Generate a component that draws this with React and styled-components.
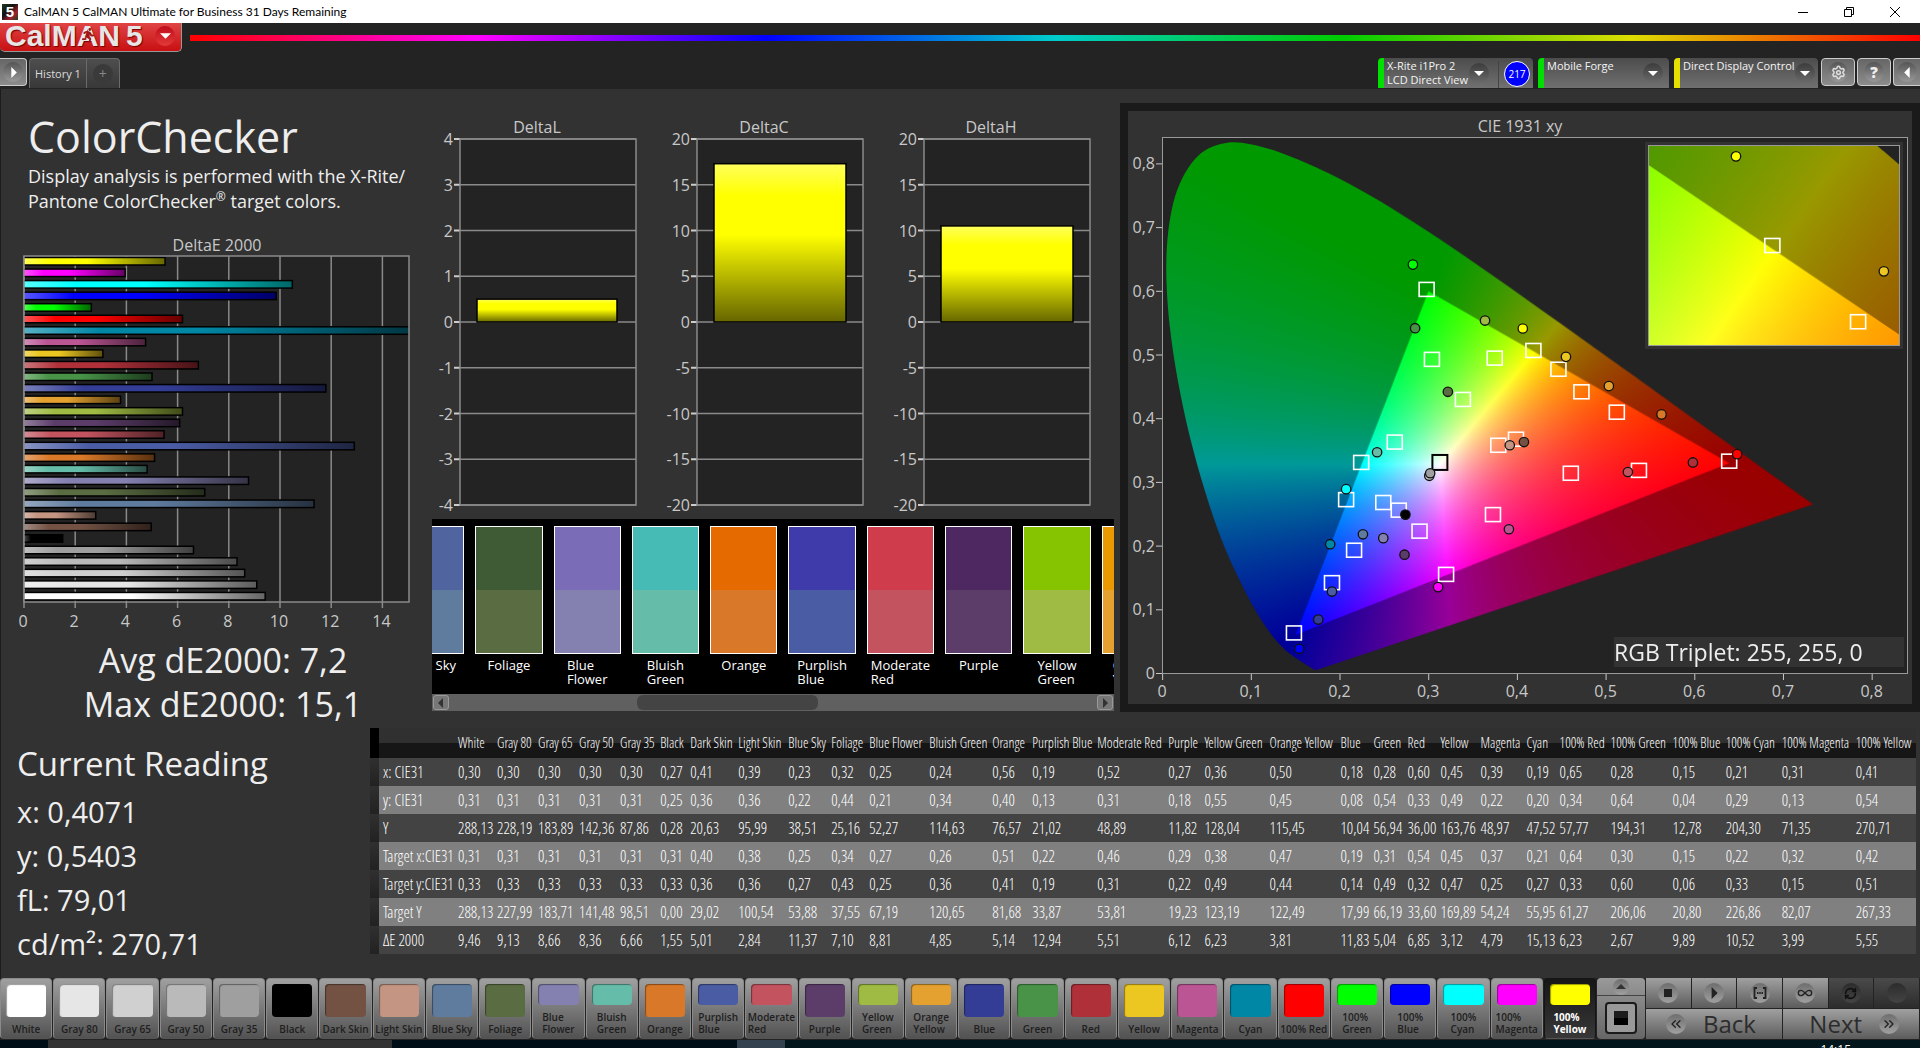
import React, { useEffect, useRef } from "react";
import styled, { createGlobalStyle } from "styled-components";
import { FaRunning } from "react-icons/fa";
import {
  ChevronsLeft,
  ChevronsRight,
  Infinity as InfinityIcon,
  RefreshCw,
  Settings,
} from "lucide-react";

// name, target color, measured color, then the table column:
// x, y, Y, target x, target y, target Y, dE2000, column weight
const PATCHES = [
  ["White", "#ffffff", "#ffffff", "0,30", "0,31", "288,13", "0,31", "0,33", "288,13", "9,46", 39],
  ["Gray 80", "#e6e6e6", "#e6e6e6", "0,30", "0,31", "228,19", "0,31", "0,33", "227,99", "9,13", 41],
  ["Gray 65", "#d0d0d0", "#d0d0d0", "0,30", "0,31", "183,89", "0,31", "0,33", "183,71", "8,66", 41],
  ["Gray 50", "#bababa", "#bababa", "0,30", "0,31", "142,36", "0,31", "0,33", "141,48", "8,36", 41],
  ["Gray 35", "#9f9f9f", "#9f9f9f", "0,30", "0,31", "87,86", "0,31", "0,33", "98,51", "6,66", 40],
  ["Black", "#000000", "#000000", "0,27", "0,25", "0,28", "0,31", "0,33", "0,00", "1,55", 30],
  ["Dark Skin", "#735244", "#735244", "0,41", "0,36", "20,63", "0,40", "0,36", "29,02", "5,01", 48],
  ["Light Skin", "#c49582", "#c49582", "0,39", "0,36", "95,99", "0,38", "0,36", "100,54", "2,84", 50],
  ["Blue Sky", "#5f7b9e", "#50659f", "0,23", "0,22", "38,51", "0,25", "0,27", "53,88", "11,37", 43],
  ["Foliage", "#5a6c42", "#3f5b35", "0,32", "0,44", "25,16", "0,34", "0,43", "37,55", "7,10", 38],
  ["Blue Flower", "#8480b0", "#7b6cb7", "0,25", "0,21", "52,27", "0,27", "0,25", "67,19", "8,81", 60],
  ["Bluish Green", "#65bda9", "#46bab4", "0,24", "0,34", "114,63", "0,26", "0,36", "120,65", "4,85", 63],
  ["Orange", "#d97828", "#e56b00", "0,56", "0,40", "76,57", "0,51", "0,41", "81,68", "5,14", 40],
  ["Purplish Blue", "#4a5ca4", "#3f3baa", "0,19", "0,13", "21,02", "0,22", "0,19", "33,87", "12,94", 65],
  ["Moderate Red", "#c2535f", "#cf3c4b", "0,52", "0,31", "48,89", "0,46", "0,31", "53,81", "5,51", 71],
  ["Purple", "#5c3d6a", "#4e2861", "0,27", "0,18", "11,82", "0,29", "0,22", "19,23", "6,12", 36],
  ["Yellow Green", "#9fbb43", "#86c300", "0,36", "0,55", "128,04", "0,38", "0,49", "123,19", "6,23", 65],
  ["Orange Yellow", "#e5a12f", "#ea9a00", "0,50", "0,45", "115,45", "0,47", "0,44", "122,49", "3,81", 71],
  ["Blue", "#333d96", "#333d96", "0,18", "0,08", "10,04", "0,19", "0,14", "17,99", "11,83", 33],
  ["Green", "#489348", "#489348", "0,28", "0,54", "56,94", "0,31", "0,49", "66,19", "5,04", 34],
  ["Red", "#af3039", "#af3039", "0,60", "0,33", "36,00", "0,54", "0,32", "33,60", "6,85", 33],
  ["Yellow", "#ecc721", "#ecc721", "0,45", "0,49", "163,76", "0,45", "0,47", "169,89", "3,12", 40],
  ["Magenta", "#bb5594", "#bb5594", "0,39", "0,22", "48,97", "0,37", "0,25", "54,24", "4,79", 46],
  ["Cyan", "#0087a6", "#0087a6", "0,19", "0,20", "47,52", "0,21", "0,27", "55,95", "15,13", 33],
  ["100% Red", "#ff0000", "#ff0000", "0,65", "0,34", "57,77", "0,64", "0,33", "61,27", "6,23", 51],
  ["100% Green", "#00ff00", "#00ff00", "0,28", "0,64", "194,31", "0,30", "0,60", "206,06", "2,67", 62],
  ["100% Blue", "#0000ff", "#0000ff", "0,15", "0,04", "12,78", "0,15", "0,06", "20,80", "9,89", 53],
  ["100% Cyan", "#00ffff", "#00ffff", "0,21", "0,29", "204,30", "0,22", "0,33", "226,86", "10,52", 56],
  ["100% Magenta", "#ff00ff", "#ff00ff", "0,31", "0,13", "71,35", "0,32", "0,15", "82,07", "3,99", 74],
  ["100% Yellow", "#ffff00", "#ffff00", "0,41", "0,54", "270,71", "0,42", "0,51", "267,33", "5,55", 64],
].map(([name, target, measured, ...rest]) => ({
  name,
  target,
  measured,
  values: rest.slice(0, 7),
  dE: parseFloat(rest[6].replace(",", ".")),
  weight: rest[7],
}));

const GRIP_WEIGHT = 9;
const LABEL_WEIGHT = 75;
const TOTAL_WEIGHT = PATCHES.reduce((sum, p) => sum + p.weight, GRIP_WEIGHT + LABEL_WEIGHT);
const colWidth = (weight) => `${(weight / TOTAL_WEIGHT) * 100}%`;

const ROW_LABELS = ["x: CIE31", "y: CIE31", "Y", "Target x:CIE31", "Target y:CIE31", "Target Y", "ΔE 2000"];

const LOCUS = [
  [0.1741, 0.005], [0.1714, 0.0051], [0.1689, 0.0069], [0.1644, 0.0109], [0.1566, 0.0177],
  [0.144, 0.0297], [0.1355, 0.0399], [0.1241, 0.0578], [0.1096, 0.0868], [0.0913, 0.1327],
  [0.0687, 0.2007], [0.0454, 0.295], [0.0235, 0.4127], [0.0082, 0.5384], [0.0039, 0.6548],
  [0.0139, 0.7502], [0.0389, 0.812], [0.0743, 0.8338], [0.1142, 0.8262], [0.1547, 0.8059],
  [0.1929, 0.7816], [0.2296, 0.7543], [0.2658, 0.7243], [0.3016, 0.6923], [0.3373, 0.6589],
  [0.3731, 0.6245], [0.4087, 0.5896], [0.4441, 0.5547], [0.4788, 0.5202], [0.5125, 0.4866],
  [0.5752, 0.4242], [0.627, 0.3725], [0.6658, 0.334], [0.6915, 0.3083], [0.719, 0.2809],
  [0.7347, 0.2653],
];

const REC709 = [[0.64, 0.33], [0.3, 0.6], [0.15, 0.06]];

const TARGETS = [
  [0.298, 0.603], [0.304, 0.493], [0.375, 0.495], [0.4187, 0.507], [0.447, 0.4775],
  [0.473, 0.442], [0.513, 0.41], [0.339, 0.43], [0.262, 0.363], [0.224, 0.331],
  [0.207, 0.2725], [0.249, 0.268], [0.2665, 0.256], [0.29, 0.223], [0.373, 0.249],
  [0.461, 0.314], [0.538, 0.3185], [0.64, 0.333], [0.399, 0.3675], [0.379, 0.358],
  [0.216, 0.193], [0.191, 0.142], [0.148, 0.063], [0.32, 0.155],
];

const MEASURED = [
  [0.2825, 0.642, "#00ff00"], [0.285, 0.542, "#489348"], [0.364, 0.554, "#9fbb43"],
  [0.4067, 0.5415, "#ffff00"], [0.4555, 0.497, "#ecc721"], [0.504, 0.451, "#e5a12f"],
  [0.5635, 0.4065, "#d97828"], [0.322, 0.442, "#5a6c42"], [0.242, 0.347, "#65bda9"],
  [0.207, 0.289, "#00ffff"], [0.301, 0.31, "#c8c8c8"], [0.302, 0.314, "#9f9f9f"],
  [0.392, 0.358, "#c49582"], [0.408, 0.363, "#735244"], [0.599, 0.331, "#af3039"],
  [0.649, 0.344, "#ff0000"], [0.5255, 0.316, "#c2535f"], [0.391, 0.226, "#bb5594"],
  [0.274, 0.249, "#000000"], [0.226, 0.218, "#5f7b9e"], [0.249, 0.212, "#8480b0"],
  [0.189, 0.2025, "#0087a6"], [0.273, 0.186, "#5c3d6a"], [0.311, 0.135, "#ff00ff"],
  [0.191, 0.128, "#4a5ca4"], [0.1755, 0.084, "#333d96"], [0.154, 0.038, "#0000ff"],
];

const MAIN_VIEW = { x0: 0, x1: 0.841, y0: 0, y1: 0.841, w: 745, h: 536 };
const ZOOM_VIEW = { x0: 0.378, x1: 0.4605, y0: 0.4685, y1: 0.5455, w: 248, h: 198 };

const px = (view, x) => ((x - view.x0) / (view.x1 - view.x0)) * view.w;
const py = (view, y) => ((view.y1 - y) / (view.y1 - view.y0)) * view.h;

const xyToRgb = (x, y) => {
  const z = 1 - x - y;
  const rgb = [
    3.2406 * x - 1.5372 * y - 0.4986 * z,
    -0.9689 * x + 1.8758 * y + 0.0415 * z,
    0.0557 * x - 0.204 * y + 1.057 * z,
  ].map((v) => Math.max(0, v));
  const max = Math.max(...rgb) || 1;
  return rgb.map((v) => (v / max) * 255);
};

const drawLocus = (ctx, view) => {
  const pts = LOCUS.map(([x, y]) => [px(view, x), py(view, y)]);
  ctx.moveTo(...pts[0]);
  for (let i = 0; i < pts.length - 1; i++) {
    const p0 = pts[i - 1] || pts[i];
    const p1 = pts[i];
    const p2 = pts[i + 1];
    const p3 = pts[i + 2] || p2;
    ctx.bezierCurveTo(
      p1[0] + (p2[0] - p0[0]) / 6,
      p1[1] + (p2[1] - p0[1]) / 6,
      p2[0] - (p3[0] - p1[0]) / 6,
      p2[1] - (p3[1] - p1[1]) / 6,
      p2[0],
      p2[1]
    );
  }
  ctx.closePath();
};

const ChromaPlot = ({ view, children }) => {
  const ref = useRef(null);

  useEffect(() => {
    const ctx = ref.current.getContext("2d");
    const { w, h } = view;
    const image = ctx.createImageData(w, h);
    for (let j = 0; j < h; j++) {
      for (let i = 0; i < w; i++) {
        const x = view.x0 + (i / w) * (view.x1 - view.x0);
        const y = view.y1 - (j / h) * (view.y1 - view.y0);
        const [r, g, b] = xyToRgb(x, y);
        image.data.set([r, g, b, 255], (j * w + i) * 4);
      }
    }
    ctx.putImageData(image, 0, 0);

    // darken everything outside the gamut triangle
    ctx.fillStyle = "rgba(0, 0, 0, 0.4)";
    ctx.beginPath();
    ctx.rect(0, 0, w, h);
    REC709.forEach(([x, y], i) =>
      i ? ctx.lineTo(px(view, x), py(view, y)) : ctx.moveTo(px(view, x), py(view, y))
    );
    ctx.closePath();
    ctx.fill("evenodd");

    ctx.globalCompositeOperation = "destination-in";
    ctx.fillStyle = "#000";
    ctx.beginPath();
    drawLocus(ctx, view);
    ctx.fill();
    ctx.globalCompositeOperation = "source-over";
  }, [view]);

  return (
    <PlotStack>
      <canvas ref={ref} width={view.w} height={view.h} />
      <svg viewBox={`0 0 ${view.w} ${view.h}`} preserveAspectRatio="none">
        {TARGETS.map(([x, y]) => (
          <rect
            key={`${x}${y}`}
            x={px(view, x) - 7.5}
            y={py(view, y) - 7}
            width="15"
            height="14"
            fill="none"
            stroke="#fff"
            strokeWidth="1.6"
          />
        ))}
        <rect x={px(view, 0.313) - 7.5} y={py(view, 0.331) - 7.5} width="15" height="15" fill="none" stroke="#000" strokeWidth="2" />
        {MEASURED.map(([x, y, color]) => (
          <circle
            key={`${x}${y}`}
            cx={px(view, x)}
            cy={py(view, y)}
            r="4.7"
            fill={color}
            stroke="#111"
            strokeWidth="1.3"
          />
        ))}
      </svg>
      {children}
    </PlotStack>
  );
};

const CieChart = () => {
  const ticks = [0, 1, 2, 3, 4, 5, 6, 7, 8];
  const label = (t) => (t ? `0,${t}` : "0");
  return (
    <CiePanel>
      <ChartTitle>CIE 1931 xy</ChartTitle>
      <CieGrid>
        <svg viewBox="0 0 34 550" width="34" height="550">
          {ticks.map((t) => (
            <g key={t}>
              <AxisText x="27" y={542 - t * 63.7} textAnchor="end">
                {label(t)}
              </AxisText>
              <path d={`M28 ${536.5 - t * 63.7}h6`} stroke="#c8c8c8" />
            </g>
          ))}
        </svg>
        <CieFrame>
          <ChromaPlot view={MAIN_VIEW}>
            <ZoomBox>
              <ChromaPlot view={ZOOM_VIEW} />
            </ZoomBox>
            <Triplet>RGB Triplet: 255, 255, 0</Triplet>
          </ChromaPlot>
        </CieFrame>
      </CieGrid>
      <svg viewBox="0 0 783 30" width="100%">
        {ticks.map((t) => (
          <g key={t}>
            <path d={`M${34.5 + t * 88.6} 0v6`} stroke="#c8c8c8" />
            <AxisText x={34 + t * 88.6} y="23" textAnchor="middle">
              {label(t)}
            </AxisText>
          </g>
        ))}
      </svg>
    </CiePanel>
  );
};

const DeltaEChart = () => {
  const scale = 25.6;
  const bars = [...PATCHES].reverse();
  return (
    <svg viewBox="0 0 410 400" width="100%" role="img" aria-label="DeltaE 2000">
      <defs>
        <linearGradient id="shadeX">
          <stop offset="0" stopColor="#fff" stopOpacity="0.35" />
          <stop offset="0.2" stopColor="#fff" stopOpacity="0" />
          <stop offset="0.45" stopColor="#000" stopOpacity="0" />
          <stop offset="1" stopColor="#000" stopOpacity="0.6" />
        </linearGradient>
        <clipPath id="plotE">
          <rect x="24" y="26" width="385" height="348" />
        </clipPath>
      </defs>
      <AxisText x="217" y="22" textAnchor="middle">
        DeltaE 2000
      </AxisText>
      <rect x="24" y="27" width="385" height="346" fill="#232323" />
      {[0, 2, 4, 6, 8, 10, 12, 14].map((t) => (
        <g key={t}>
          <path d={`M${24 + t * scale} 27v352`} stroke="#8a8a8a" strokeWidth="1.5" />
          <AxisText x={23 + t * scale} y="398" textAnchor="middle">
            {t}
          </AxisText>
        </g>
      ))}
      <g clipPath="url(#plotE)">
        {bars.map((b, i) => (
          <g key={b.name}>
            <rect x="23" y={28.5 + i * 11.55} width={b.dE * scale} height="7.5" fill={b.target} />
            <rect
              x="23"
              y={28.5 + i * 11.55}
              width={b.dE * scale}
              height="7.5"
              fill="url(#shadeX)"
              stroke="#000"
              strokeWidth="1.5"
            />
          </g>
        ))}
      </g>
      <rect x="24" y="27" width="385" height="346" fill="none" stroke="#8a8a8a" strokeWidth="1.5" />
    </svg>
  );
};

const DeltaChart = ({ title, max, left, value, barLeft, barRight }) => {
  const steps = [4, 3, 2, 1, 0, -1, -2, -3, -4];
  const zero = 205;
  const height = (value / max) * 183;
  return (
    <svg viewBox="0 0 210 402" role="img" aria-label={title}>
      <defs>
        <linearGradient id="shadeY" x1="0" y1="0" x2="0" y2="1">
          <stop offset="0" stopColor="#ffff5c" />
          <stop offset="0.2" stopColor="#ffff00" />
          <stop offset="0.45" stopColor="#ffff00" />
          <stop offset="1" stopColor="#666600" />
        </linearGradient>
      </defs>
      <AxisText x="105" y="16" textAnchor="middle">
        {title}
      </AxisText>
      <rect x={left} y="22" width={204 - left} height="366" fill="#232323" />
      {steps.map((s) => (
        <g key={s}>
          <path d={`M${left} ${zero - s * 45.75}H204`} stroke="#8a8a8a" strokeWidth="1.5" />
          <path d={`M${left - 6} ${zero - s * 45.75}h6`} stroke="#ccc" strokeWidth="2" />
          <AxisText x={left - 7} y={zero + 6 - s * 45.75} textAnchor="end">
            {(s * max) / 4}
          </AxisText>
        </g>
      ))}
      <rect x={left} y="22" width={204 - left} height="366" fill="none" stroke="#8a8a8a" strokeWidth="1.5" />
      <rect
        x={barLeft}
        y={zero - height}
        width={barRight - barLeft}
        height={height}
        fill="url(#shadeY)"
        stroke="#000"
        strokeWidth="1.5"
      />
    </svg>
  );
};

const splitLabel = (name) => {
  const words = name.split(" ");
  const second = words[1];
  if (!second || /^(Gray|Dark|Light)/.test(name) || name === "Blue Sky" || name === "100% Red") {
    return [name];
  }
  return words;
};

const Lines = ({ name }) => (
  <LabelBlock>
    {splitLabel(name).map((line) => (
      <div key={line}>{line}</div>
    ))}
  </LabelBlock>
);

const SwatchStrip = () => (
  <Strip>
    <StripItems>
      {PATCHES.slice(8, 18).map((p) => (
        <StripItem key={p.name}>
          <Swatch $top={p.measured} $bottom={p.target} />
          <Lines name={p.name} />
        </StripItem>
      ))}
    </StripItems>
    <ScrollBar>
      <ScrollButton aria-label="Scroll left">
        <Triangle $dir="left" $color="#333" />
      </ScrollButton>
      <ScrollTrack>
        <ScrollThumb />
      </ScrollTrack>
      <ScrollButton aria-label="Scroll right">
        <Triangle $dir="right" $color="#333" />
      </ScrollButton>
    </ScrollBar>
  </Strip>
);

const Triangle = ({ $dir, $color = "#fff", size = 10 }) => {
  const paths = {
    left: "M7 0v10L2 5z",
    right: "M3 0v10l5-5z",
    down: "M0 3h10L5 8z",
    up: "M0 7h10L5 2z",
  };
  return (
    <svg width={size} height={size} viewBox="0 0 10 10">
      <path d={paths[$dir]} fill={$color} />
    </svg>
  );
};

const DataTable = () => (
  <TableWrap>
    <Table>
      <colgroup>
        <col style={{ width: colWidth(GRIP_WEIGHT) }} />
        <col style={{ width: colWidth(LABEL_WEIGHT) }} />
        {PATCHES.map((p) => (
          <col key={p.name} style={{ width: colWidth(p.weight) }} />
        ))}
      </colgroup>
      <thead>
        <tr>
          <Corner />
          <th />
          {PATCHES.map((p) => (
            <th key={p.name} scope="col">
              {p.name}
            </th>
          ))}
        </tr>
      </thead>
      <tbody>
        {ROW_LABELS.map((label, row) => (
          <tr key={label}>
            <RowGrip />
            <th scope="row">{label}</th>
            {PATCHES.map((p) => (
              <td key={p.name}>{p.values[row]}</td>
            ))}
          </tr>
        ))}
      </tbody>
    </Table>
  </TableWrap>
);

const Device = ({ color, lines, grow, reading }) => (
  <DeviceBox $color={color} $grow={grow}>
    <DeviceButton $wide={Boolean(reading)}>
      <span>
        {lines.map((l) => (
          <div key={l}>{l}</div>
        ))}
      </span>
      <Knob $dark>
        <Triangle $dir="down" />
      </Knob>
    </DeviceButton>
    {reading && (
      <ReadingCell>
        <ReadingBadge>{reading}</ReadingBadge>
      </ReadingCell>
    )}
  </DeviceBox>
);

const App = () => (
  <Window>
    <GlobalStyle />
    <TitleBar>
      <AppIcon>5</AppIcon>
      <span>CalMAN 5 CalMAN Ultimate for Business 31 Days Remaining</span>
      <WindowButtons>
        <button aria-label="Minimize">
          <svg width="10" height="10" viewBox="0 0 10 10"><path d="M0 5.5h10" /></svg>
        </button>
        <button aria-label="Restore">
          <svg width="10" height="10" viewBox="0 0 10 10"><path d="M.5 2.5h7v7h-7zM2.5 2.5v-2h7v7h-2" /></svg>
        </button>
        <button aria-label="Close">
          <svg width="10" height="10" viewBox="0 0 10 10"><path d="M0 0l10 10M10 0L0 10" /></svg>
        </button>
      </WindowButtons>
    </TitleBar>

    <Header>
      <Logo>
        <LogoText>
          CalM
          <LogoLetter>
            A
            <FaRunning />
          </LogoLetter>
          N<span>5</span>
        </LogoText>
        <LogoKnob>
          <Triangle $dir="down" size={11} />
        </LogoKnob>
      </Logo>
      <Rainbow />
    </Header>

    <TabBar>
      <SquareButton aria-label="Open panel" $flush="left">
        <Knob><Triangle $dir="right" size={11} /></Knob>
      </SquareButton>
      <Tabs>
        <button>History 1</button>
        <button aria-label="Add tab"><AddKnob>+</AddKnob></button>
      </Tabs>
      <Device color="#00e000" lines={["X-Rite i1Pro 2", "LCD Direct View"]} grow={155} reading="217" />
      <Device color="#00e000" lines={["Mobile Forge"]} grow={131} />
      <Device color="#e6e000" lines={["Direct Display Control"]} grow={144} />
      <RightButtons>
        <SquareButton aria-label="Settings">
          <Knob><Settings size={15} color="#ddd" strokeWidth={2.4} /></Knob>
        </SquareButton>
        <SquareButton aria-label="Help">
          <Knob>?</Knob>
        </SquareButton>
        <SquareButton aria-label="Collapse" $flush="right">
          <Knob><Triangle $dir="left" size={11} /></Knob>
        </SquareButton>
      </RightButtons>
    </TabBar>

    <Main>
      <TopRow>
        <Overview>
          <h1>ColorChecker</h1>
          <p>
            Display analysis is performed with the X-Rite/
            <br />
            Pantone ColorChecker<sup>®</sup> target colors.
          </p>
          <DeltaEChart />
          <Averages>
            <div>Avg dE2000: 7,2</div>
            <div>Max dE2000: 15,1</div>
          </Averages>
        </Overview>
        <Middle>
          <DeltaCharts>
            <DeltaChart title="DeltaL" max={4} left={28} value={0.5} barLeft={45} barRight={185} />
            <DeltaChart title="DeltaC" max={20} left={38} value={17.3} barLeft={55} barRight={187} />
            <DeltaChart title="DeltaH" max={20} left={38} value={10.5} barLeft={55} barRight={187} />
          </DeltaCharts>
          <SwatchStrip />
        </Middle>
        <CieChart />
      </TopRow>
      <BottomRow>
        <Reading>
          <h2>Current Reading</h2>
          <div>x: 0,4071</div>
          <div>y: 0,5403</div>
          <div>fL: 79,01</div>
          <div>cd/m²: 270,71</div>
        </Reading>
        <DataTable />
      </BottomRow>
    </Main>

    <Footer>
      <PatchButtons>
        {PATCHES.map((p) => (
          <PatchButton key={p.name} aria-pressed={p.name === "100% Yellow"} $active={p.name === "100% Yellow"}>
            <PatchColor $color={p.target} />
            <Lines name={p.name} />
          </PatchButton>
        ))}
      </PatchButtons>
      <PatternBox>
        <button aria-label="Expand"><SmallKnob><Triangle $dir="up" $color="#333" /></SmallKnob></button>
        <button aria-label="Window pattern"><PatternIcon /></button>
      </PatternBox>
      <Controls>
        <button aria-label="Stop">
          <SmallKnob><svg width="8" height="8"><rect width="8" height="8" fill="#222" /></svg></SmallKnob>
        </button>
        <button aria-label="Read"><SmallKnob><Triangle $dir="right" $color="#222" size={12} /></SmallKnob></button>
        <button aria-label="Read series">
          <SmallKnob>
            <svg width="14" height="12" viewBox="0 0 14 12" fill="none" stroke="#222" strokeWidth="1.8">
              <path d="M4 1H1.500v10H4M10 1h2.500v10H10" />
              <path d="M4 6h6" strokeDasharray="1.500 .75" />
            </svg>
          </SmallKnob>
        </button>
        <button aria-label="Read continuous"><SmallKnob><InfinityIcon size={16} color="#222" /></SmallKnob></button>
        <button aria-label="Refresh" disabled><SmallKnob><RefreshCw size={13} color="#111" strokeWidth={3} /></SmallKnob></button>
        <button aria-label="Record" disabled><SmallKnob /></button>
        <NavButton>
          <SmallKnob><ChevronsLeft size={16} color="#222" /></SmallKnob>
          Back
        </NavButton>
        <NavButton $end>
          Next
          <SmallKnob><ChevronsRight size={16} color="#222" /></SmallKnob>
        </NavButton>
      </Controls>
    </Footer>
    <TaskBar>
      <i />
      <i />
      <i />
      <i />
      <span>14:15</span>
    </TaskBar>
  </Window>
);

const GlobalStyle = createGlobalStyle`
  * {
    box-sizing: border-box;
  }

  body {
    margin: 0;
    background: #232323;
    color: #eee;
    font-family: "Open Sans", "Noto Sans", sans-serif;
    font-size: 12px;
  }

  button {
    font: inherit;
    color: inherit;
    border: 0;
    padding: 0;
    background: none;
  }

  svg {
    display: block;
  }
`;

const Window = styled.div`
  display: flex;
  flex-direction: column;
  height: 100vh;
  overflow: hidden;
`;

const TitleBar = styled.header`
  display: flex;
  align-items: center;
  flex: none;
  gap: 6px;
  height: 23px;
  padding: 0 2px;
  background: #fff;
  color: #000;
  font-family: Lato, "Open Sans", sans-serif;
  font-size: 12px;
`;

const AppIcon = styled.span`
  width: 16px;
  height: 16px;
  background: linear-gradient(135deg, #1c3a1c, #111 40%, #a02030 70%, #204020);
  color: #fff;
  font: bold 15px/16px "Liberation Sans", sans-serif;
  text-align: center;
`;

const WindowButtons = styled.div`
  display: flex;
  margin-left: auto;

  button {
    display: grid;
    place-items: center;
    width: 46px;
    height: 20px;
  }

  path {
    fill: none;
    stroke: #000;
  }
`;

const Header = styled.div`
  display: flex;
  flex: none;
  gap: 8px;
`;

const Logo = styled.button`
  display: flex;
  align-items: center;
  justify-content: space-between;
  width: 182px;
  height: 29px;
  padding: 0 6px 3px 5px;
  background: linear-gradient(#e04444, #c80f12);
  border: 1px solid #999;
  border-top: 0;
  border-left: 0;
  border-radius: 0 0 5px 5px;
`;

const LogoText = styled.span`
  display: flex;
  padding-top: 1px;
  color: #e6e6e6;
  font: bold 30px/26px "Liberation Sans", Arial, sans-serif;
  text-shadow: 1px 1px 1px #700;

  span:last-child {
    margin-left: 6px;
  }
`;

const LogoLetter = styled.span`
  position: relative;

  svg {
    position: absolute;
    top: 5px;
    left: 5px;
    width: 12px;
    height: 15px;
    color: #a01518;
  }
`;

const LogoKnob = styled.span`
  display: grid;
  place-items: center;
  width: 20px;
  height: 20px;
  border-radius: 50%;
  background: linear-gradient(#c00c1c, #e23a3a);
`;

const Rainbow = styled.div`
  flex: 1;
  height: 6px;
  margin-top: 12px;
  background: linear-gradient(to right, #f00, #f0f, #00f, #0cc, #0c0, #dd0, #f00);
`;

const TabBar = styled.nav`
  display: flex;
  align-items: flex-start;
  flex: none;
  gap: 5px;
  height: 37px;
  padding-top: 6px;
`;

const Knob = styled.span`
  display: grid;
  place-items: center;
  flex: none;
  width: 20px;
  height: 20px;
  border-radius: 50%;
  background: ${(p) => (p.$dark ? "linear-gradient(#3c3c3c, #6a6a6a)" : "linear-gradient(#555, #999)")};
  color: #eee;
  font-size: 15px;
  font-weight: 800;
  line-height: 20px;
`;

const SquareButton = styled.button`
  display: grid;
  place-items: center;
  width: ${(p) => (p.$flush ? 27 : 34)}px;
  height: 28px;
  background: linear-gradient(#666, #8c8c8c);
  border: 1px solid #ccc;
  border-width: ${(p) =>
    p.$flush === "left" ? "1px 1px 1px 0" : p.$flush === "right" ? "1px 0 1px 1px" : "1px"};
  border-radius: ${(p) =>
    p.$flush === "left" ? "0 4px 4px 0" : p.$flush === "right" ? "4px 0 0 4px" : "4px"};
`;

const Tabs = styled.div`
  display: flex;
  margin: 0 auto 0 -3px;
  height: 30px;
  border: 1px solid #6a6a6a;
  border-bottom: 0;
  border-radius: 4px 4px 0 0;
  background: linear-gradient(#4e4e4e, #383838);
  font-size: 11px;

  button {
    padding: 0 5px;
    color: #ddd;
  }

  button + button {
    padding: 0 6px;
    border-left: 1px solid #6a6a6a;
  }
`;

const AddKnob = styled.span`
  display: block;
  width: 20px;
  height: 20px;
  border-radius: 50%;
  background: #3a3a3a;
  color: #888;
  font-size: 14px;
  line-height: 19px;
`;

const DeviceBox = styled.div`
  display: flex;
  width: ${(p) => p.$grow}px;
  height: 30px;
  border-left: 6px solid ${(p) => p.$color};
  border-radius: 4px 4px 0 0;
  background: linear-gradient(#4c4c4c, #707070);
  color: #f4f4f4;
  font-size: 11px;
  line-height: 14px;
`;

const DeviceButton = styled.button`
  display: flex;
  flex: 1;
  justify-content: space-between;
  padding: 1px ${(p) => (p.$wide ? 9 : 6)}px 0 3px;
  text-align: left;
  white-space: nowrap;

  ${Knob} {
    margin-top: 4px;
  }
`;

const ReadingCell = styled.div`
  display: grid;
  place-items: center;
  margin-top: 3px;
  padding: 0 3px 3px 5px;
  border-left: 1px solid #444;
`;

const ReadingBadge = styled.span`
  width: 26px;
  height: 26px;
  border: 1px solid #fff;
  border-radius: 50%;
  background: #0000ff;
  color: #fff;
  font-size: 10px;
  line-height: 24px;
  text-align: center;
`;

const RightButtons = styled.div`
  display: flex;
  gap: 2px;
  margin-left: -2px;
`;

const Main = styled.main`
  display: flex;
  flex-direction: column;
  flex: 1;
  min-height: 0;
  padding: 14px 0 0;
  background: #323232;
  box-shadow: inset 1px 0 #1c1c1c;
`;

const TopRow = styled.section`
  display: grid;
  grid-template-columns: 432fr 688fr 800fr;
  align-items: start;
`;

const AxisText = styled.text`
  fill: #c8c8c8;
  font-size: 16px;
`;

const Overview = styled.div`
  padding-right: 22px;

  h1 {
    margin: 7px 0 0 28px;
    font-size: 43px;
    font-weight: 400;
    line-height: 54px;
  }

  p {
    margin: 0 0 15px 28px;
    font-size: 18px;
    line-height: 25px;
    white-space: nowrap;
  }

  sup {
    font-size: 12px;
    line-height: 0;
  }
`;

const Averages = styled.div`
  padding: 9px 0 2px 36px;
  font-size: 34px;
  line-height: 44px;
  text-align: center;
`;

const Middle = styled.div`
  display: flex;
  flex-direction: column;
  padding: 14px 6px 0 0;
`;

const DeltaCharts = styled.div`
  display: flex;
  gap: 17px;
  padding-right: 18px;

  svg {
    flex: 1;
    min-width: 0;
  }
`;

const Strip = styled.div`
  overflow: hidden;
  background: #000;
`;

const StripItems = styled.div`
  display: flex;
  gap: 11px;
  height: 175px;
  margin: 0 -55px 0 -35px;
  padding-top: 7px;
`;

const StripItem = styled.div`
  display: flex;
  flex: 1;
  flex-direction: column;
  align-items: center;
  gap: 3px;
  min-width: 0;
  font-size: 13px;
  line-height: 14px;
  color: #fff;
`;

const Swatch = styled.div`
  width: 100%;
  height: 128px;
  border: 1px solid #fff;
  background: linear-gradient(${(p) => p.$top} 50%, ${(p) => p.$bottom} 50%);
`;

const LabelBlock = styled.div`
  padding-top: 1px;
  text-align: left;
  white-space: nowrap;
`;

const ScrollBar = styled.div`
  display: flex;
  height: 17px;
  padding: 1px;
  background: #606060;
`;

const ScrollButton = styled.button`
  display: grid;
  place-items: center;
  width: 16px;
  border: 1px solid #999;
  border-radius: 3px;
  background: #777;
`;

const ScrollTrack = styled.div`
  flex: 1;
`;

const ScrollThumb = styled.div`
  width: 28%;
  height: 15px;
  margin-left: 29%;
  border-radius: 6px;
  background: #444;
`;

const CiePanel = styled.div`
  border: 8px solid #1a1a1a;
  background: #323232;
  overflow: hidden;
`;

const ChartTitle = styled.div`
  padding-top: 4px;
  color: #c8c8c8;
  font-size: 16px;
  line-height: 22px;
  text-align: center;
`;

const CieGrid = styled.div`
  display: flex;
  height: 537px;
  padding-right: 4px;

  > svg {
    flex: none;
    overflow: visible;
  }
`;

const CieFrame = styled.div`
  flex: 1;
  border: 1px solid #999;
  background: #232323;
`;

const PlotStack = styled.div`
  position: relative;
  height: 100%;

  > canvas,
  > svg {
    position: absolute;
    inset: 0;
    width: 100%;
    height: 100%;
  }
`;

const ZoomBox = styled.div`
  position: absolute;
  top: 4px;
  right: 4px;
  width: 258px;
  height: 207px;
  padding: 3px;
  background: #323232;

  > div {
    border: 1px solid #999;
    background: #232323;
    overflow: hidden;
  }
`;

const Triplet = styled.div`
  position: absolute;
  right: 3px;
  bottom: 6px;
  width: 290px;
  background: #323232;
  font-size: 23px;
  line-height: 30px;
`;

const BottomRow = styled.section`
  display: flex;
  padding-right: 4px;
`;

const Reading = styled.div`
  flex: 0 0 370px;
  padding-left: 17px;
  font-size: 29px;
  line-height: 44px;

  h2 {
    margin: 14px 0 4px;
    font-size: 33px;
    font-weight: 400;
    line-height: 44px;
  }
`;

const TableWrap = styled.div`
  flex: 1;
  min-width: 0;
`;

const Table = styled.table`
  width: 100%;
  table-layout: fixed;
  border-collapse: collapse;
  color: #fff;
  font-family: "Open Sans Condensed Light", "Roboto Condensed", "Liberation Sans Narrow", "Open Sans Condensed", sans-serif;
  font-size: 16px;
  line-height: 20px;
  white-space: nowrap;

  th,
  td {
    height: 28px;
    padding: 0 0 0 4px;
    font-weight: 300;
    text-align: left;
  }

  thead th {
    height: 30px;
    background: linear-gradient(#303030 50%, #161616 50%);
    font-size: 14px;
  }

  tbody tr {
    background: #434343;
  }

  tbody tr:nth-child(even) {
    background: #808080;
  }
`;

const Corner = styled.td`
  background: #000;
`;

const RowGrip = styled.td`
  background: linear-gradient(#303030, #222);
`;

const Footer = styled.footer`
  display: flex;
  flex: none;
  height: 62px;
  padding-bottom: 1px;
`;

const PatchButtons = styled.div`
  display: flex;
  flex: 1;
`;

const PatchButton = styled.button`
  display: flex;
  flex: 1 1 0;
  flex-direction: column;
  align-items: center;
  min-width: 0;
  margin-right: 1px;
  padding: 5px 5px 3px;
  border: 1px solid ${(p) => (p.$active ? "#151515" : "#8a8a8a")};
  border-bottom-color: #555;
  border-radius: 4px;
  background: ${(p) => (p.$active ? "linear-gradient(#161616, #383838)" : "linear-gradient(#a0a0a0, #525252)")};
  color: ${(p) => (p.$active ? "#fff" : "#1e1e1e")};
  font-size: 10px;
  font-weight: ${(p) => (p.$active ? 700 : 600)};
  line-height: 12px;
`;

const PatchColor = styled.span`
  align-self: stretch;
  flex: 1;
  margin-bottom: 5px;
  border-radius: 4px;
  background: ${(p) => p.$color};
  box-shadow: inset 1px 1px 1px rgba(0, 0, 0, 0.4);
`;

const SmallKnob = styled.span`
  display: grid;
  place-items: center;
  flex: none;
  width: 20px;
  height: 20px;
  border-radius: 50%;
  background: linear-gradient(#6e6e6e, #a0a0a0);
`;

const PatternBox = styled.div`
  display: flex;
  flex-direction: column;
  width: 48px;
  margin-right: 1px;
  background: linear-gradient(#999, #666);
  border-radius: 4px;

  button {
    display: grid;
    flex: 1;
    place-items: center;
  }

  button:first-child {
    flex: 0 0 18px;
    border-bottom: 1px solid #444;
  }

  ${SmallKnob} {
    width: 16px;
    height: 16px;
  }
`;

const PatternIcon = styled.span`
  width: 32px;
  height: 32px;
  border: 2px solid #1a1a1a;
  border-radius: 4px;
  background: linear-gradient(#1c1c1c 50%, #000 50%) center / 14px 14px no-repeat, #999;
`;

const Controls = styled.div`
  display: grid;
  grid-template-columns: repeat(6, 1fr);
  grid-template-rows: 1fr 1fr;
  gap: 1px;
  width: 273px;
  margin-right: 1px;

  button {
    display: grid;
    place-items: center;
    background: linear-gradient(#a0a0a0, #5c5c5c);
  }

  button:disabled {
    background: linear-gradient(#4a4a4a, #2c2c2c);
  }

  button:disabled ${SmallKnob} {
    background: linear-gradient(#2c2c2c, #444);
  }
`;

const NavButton = styled.button`
  && {
    display: flex;
    align-items: center;
    justify-content: ${(p) => (p.$end ? "flex-end" : "flex-start")};
    grid-column: span 3;
    gap: 17px;
    padding: 0 20px;
    color: #2c2c2c;
    font-size: 24px;
    font-weight: 500;
    line-height: 28px;
  }
`;

const TaskBar = styled.div`
  display: flex;
  flex: none;
  height: 8px;
  overflow: hidden;
  background: #02161c;
  color: #fff;
  font-size: 12px;
  line-height: 14px;

  i {
    width: 48px;
    background: #000e18;
  }

  i:nth-child(2) {
    width: 344px;
    background: #333;
  }

  i:nth-child(3) {
    width: 345px;
  }

  i:nth-child(4) {
    background: #344250;
  }

  span {
    margin: 3px 69px 0 auto;
  }
`;

export default App;
